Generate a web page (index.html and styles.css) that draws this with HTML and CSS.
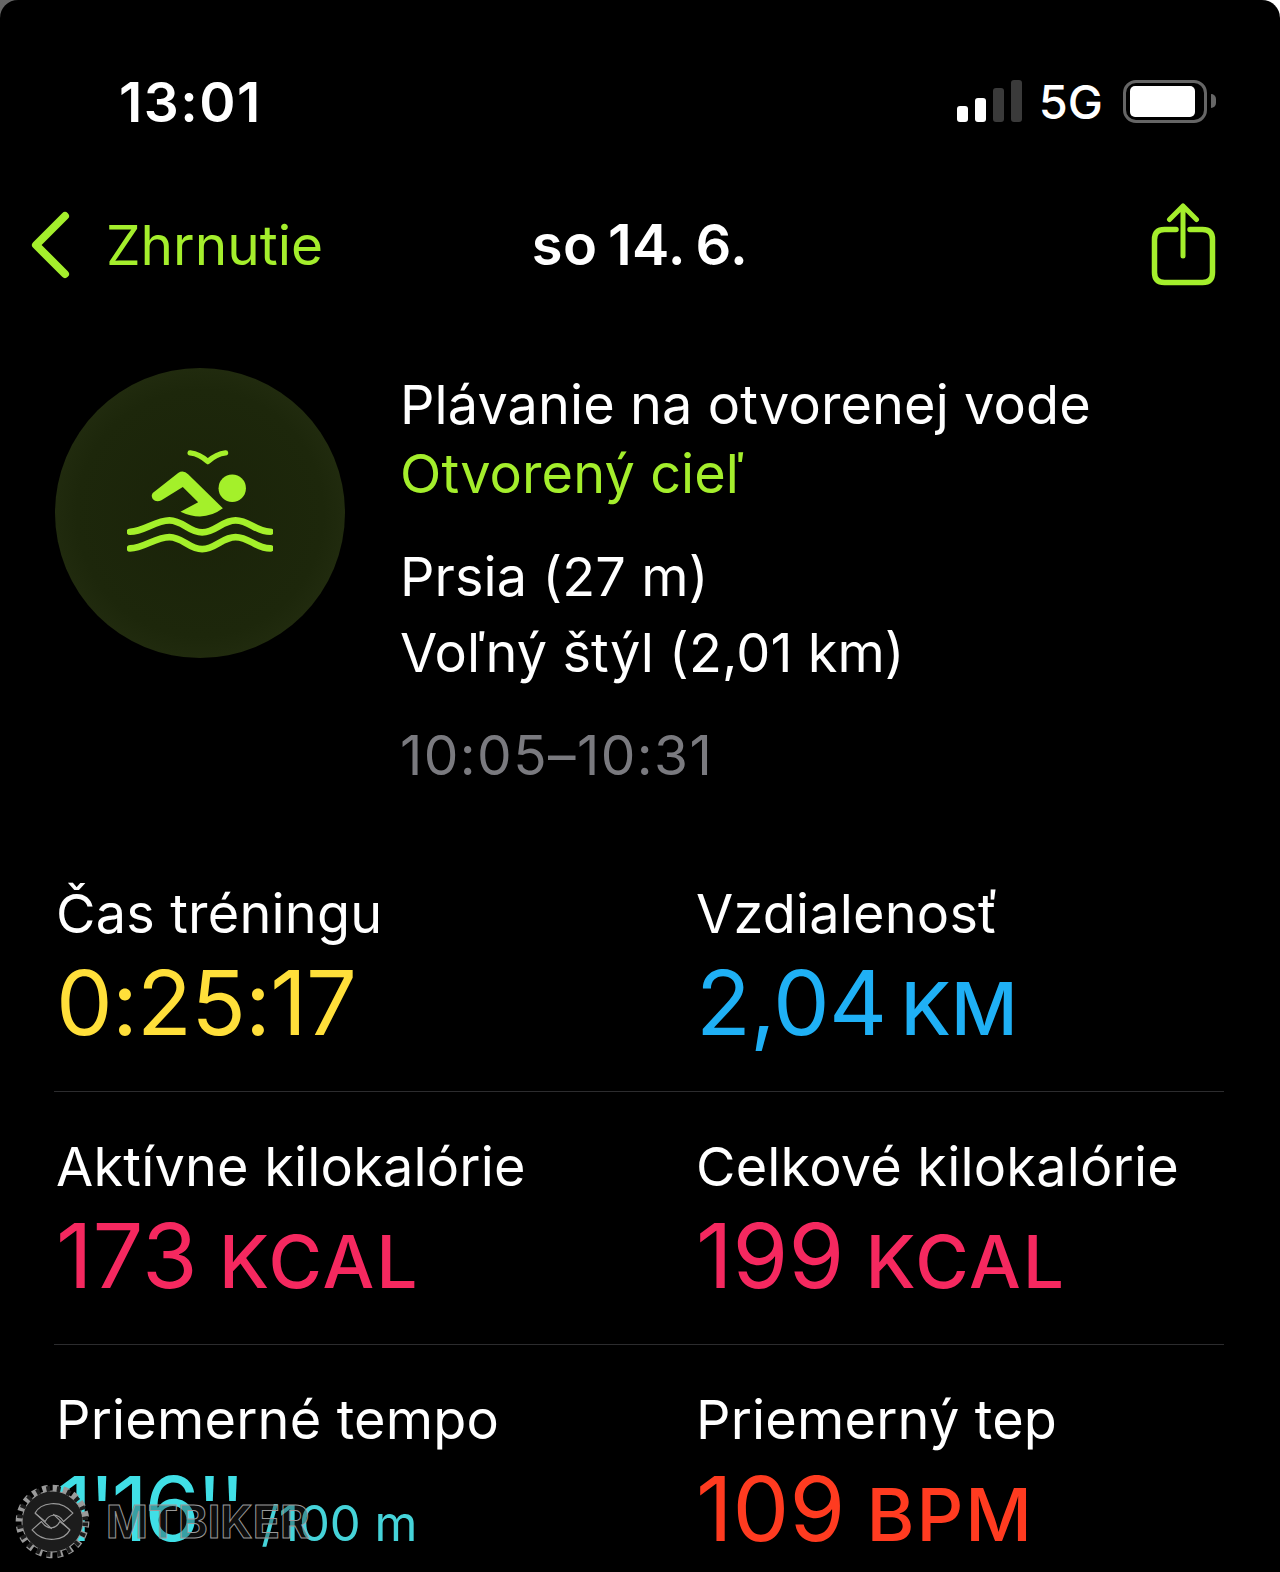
FILE: index.html
```html
<!DOCTYPE html>
<html lang="sk">
<head>
    <title>Plávanie na otvorenej vode</title>
    <meta charset="UTF-8">
    <link rel="stylesheet" href="styles.css">
</head>
<body>
    <div class="screen">
        <div class="status-bar">
            <span class="time">13:01</span>
            <div class="status-icons">
                <div class="signal">
                    <i class="bar bar1"></i>
                    <i class="bar bar2"></i>
                    <i class="bar bar3"></i>
                    <i class="bar bar4"></i>
                </div>
                <span class="network">5G</span>
                <div class="battery">
                    <div class="battery-fill"></div>
                </div>
                <div class="battery-cap"></div>
            </div>
        </div>

        <div class="nav">
            <div class="nav-back">
                <svg class="chevron" viewBox="0 0 40 68" width="40" height="68">
                    <path d="M35 5 L6 34 L35 63" fill="none" stroke="#a4ee2c" stroke-width="8" stroke-linecap="round" stroke-linejoin="round"/>
                </svg>
                <span>Zhrnutie</span>
            </div>
            <div class="nav-title">so 14. 6.</div>
            <svg class="share" viewBox="0 0 66 84" width="66" height="84">
                <path d="M26 27.5 H14.5 Q4.5 27.5 4.5 37.5 V70.5 Q4.5 80.5 14.5 80.5 H52.5 Q62.5 80.5 62.5 70.5 V37.5 Q62.5 27.5 52.5 27.5 H40" fill="none" stroke="#a4ee2c" stroke-width="5.5" stroke-linecap="round"/>
                <path d="M33 54 V4 M19.5 17.5 L33 4 L46.5 17.5" fill="none" stroke="#a4ee2c" stroke-width="5" stroke-linecap="round" stroke-linejoin="round"/>
            </svg>
        </div>

        <div class="workout">
            <div class="workout-icon">
                <svg viewBox="265 265 437 310" width="146" height="104">
                    <path d="M454 276 Q482 279 507 302 Q532 279 560 276" fill="none" stroke="#a4f02a" stroke-width="16" stroke-linecap="round" stroke-linejoin="round"/>
                    <circle cx="580" cy="382" r="41" fill="#a4f02a"/>
                    <path d="M342 396 L418 336 Q434 326 448 340 L552 442 Q495 485 425 452 L478 424 L432 378 L368 418 Q352 425 342 414 Q336 404 342 396 Z" fill="#a4f02a"/>
                    <path d="M274 512 C315 512 350 478 392 478 C432 478 450 514 490 514 C530 514 550 478 590 478 C632 478 650 512 694 512" fill="none" stroke="#a4f02a" stroke-width="20" stroke-linecap="round"/>
                    <path d="M274 562 C315 562 350 528 392 528 C432 528 450 564 490 564 C530 564 550 528 590 528 C632 528 650 562 694 562" fill="none" stroke="#a4f02a" stroke-width="20" stroke-linecap="round"/>
                </svg>
            </div>
            <div class="workout-info">
                <div class="info-line">Plávanie na otvorenej vode</div>
                <div class="info-line lime">Otvorený cieľ</div>
                <div class="info-line strokes">Prsia (27 m)</div>
                <div class="info-line">Voľný štýl (2,01 km)</div>
                <div class="info-line hours">10:05–10:31</div>
            </div>
        </div>

        <div class="stats">
            <div class="stat-row">
                <div class="stat">
                    <div class="stat-label">Čas tréningu</div>
                    <div class="stat-value yellow">0:25:17</div>
                </div>
                <div class="stat">
                    <div class="stat-label">Vzdialenosť</div>
                    <div class="stat-value blue">2,04 <span class="unit">KM</span></div>
                </div>
            </div>
            <div class="stat-row">
                <div class="stat">
                    <div class="stat-label">Aktívne kilokalórie</div>
                    <div class="stat-value pink">173 <span class="unit">KCAL</span></div>
                </div>
                <div class="stat">
                    <div class="stat-label">Celkové kilokalórie</div>
                    <div class="stat-value pink">199 <span class="unit">KCAL</span></div>
                </div>
            </div>
            <div class="stat-row last">
                <div class="stat">
                    <div class="stat-label">Priemerné tempo</div>
                    <div class="stat-value cyan"><span class="pace">1'16''</span> <span class="unit-small">/100 m</span></div>
                </div>
                <div class="stat">
                    <div class="stat-label">Priemerný tep</div>
                    <div class="stat-value red">109 <span class="unit">BPM</span></div>
                </div>
            </div>
        </div>

        <div class="watermark">
            <svg viewBox="12 15 230 230" width="77" height="77">
                <circle cx="127" cy="130" r="100" fill="none" stroke="#9a9a9a" stroke-width="20" stroke-dasharray="17 14.4"/>
                <circle cx="127" cy="130" r="91" fill="#1c1c1c" stroke="#9a9a9a" stroke-width="3"/>
                <circle cx="127" cy="130" r="98" fill="none" stroke="#1c1c1c" stroke-width="17" stroke-dasharray="11 20.4" stroke-dashoffset="-3"/>
                <path d="M75 105 C90 75 150 60 188 105 L160 130 C140 100 115 110 105 130 Z" fill="none" stroke="#9a9a9a" stroke-width="3.5" stroke-linejoin="round"/>
                <path d="M179 155 C164 185 104 200 66 155 L94 130 C114 160 139 150 149 130 Z" fill="none" stroke="#9a9a9a" stroke-width="3.5" stroke-linejoin="round"/>
                <path d="M75 105 L125 152 M179 155 L129 108" fill="none" stroke="#9a9a9a" stroke-width="3.5"/>
            </svg>
            <span class="watermark-text">MTBIKER</span>
        </div>
    </div>
</body>
</html>
```

FILE: styles.css
```css
* {
    box-sizing: border-box;
}
html, body {
    margin: 0;
    padding: 0;
    background: linear-gradient(to right, #666, #fff);
}
.screen {
    position: relative;
    width: 1280px;
    height: 1572px;
    overflow: hidden;
    border-radius: 18px 18px 0 0;
    background: #000;
    color: #fff;
    font-family: Inter, "Liberation Sans", sans-serif;
}

/* status bar */
.status-bar {
    height: 200px;
    padding: 72px 64px 0 119px;
    display: flex;
    justify-content: space-between;
    align-items: flex-start;
}
.time {
    font-size: 55px;
    font-weight: 600;
    line-height: 60px;
    letter-spacing: 1.5px;
}
.status-icons {
    display: flex;
    align-items: center;
    height: 44px;
    margin-top: 7px;
}
.signal {
    display: flex;
    align-items: flex-end;
    gap: 7px;
    height: 42px;
    margin-right: 17px;
}
.bar {
    display: block;
    width: 11px;
    border-radius: 3px;
    background: #fff;
}
.bar1 { height: 16px; }
.bar2 { height: 24px; }
.bar3 { height: 34px; background: #3a3a3a; }
.bar4 { height: 42px; background: #3a3a3a; }
.network {
    font-size: 47px;
    font-weight: 500;
    margin-right: 20px;
}
.battery {
    width: 84px;
    height: 43px;
    padding: 3px 9px 3px 4px;
    border: 3px solid #666;
    border-radius: 13px;
}
.battery-fill {
    height: 100%;
    background: #fff;
    border-radius: 5px;
}
.battery-cap {
    width: 5px;
    height: 14px;
    margin-left: 4px;
    background: #666;
    border-radius: 0 5px 5px 0;
}

/* nav */
.nav {
    position: relative;
    height: 90px;
    padding: 0 64px 0 30px;
    display: flex;
    align-items: center;
    justify-content: space-between;
    color: #a4ee2c;
}
.nav-back {
    display: flex;
    align-items: center;
    gap: 36px;
    font-size: 55px;
}
.share {
    margin-top: -3px;
}
.nav-title {
    position: absolute;
    left: 0;
    right: 0;
    text-align: center;
    color: #fff;
    font-size: 56px;
    font-weight: 600;
    letter-spacing: 0.4px;
    word-spacing: -4px;
}

/* workout header */
.workout {
    display: flex;
    gap: 55px;
    padding: 78px 0 0 55px;
}
.workout-icon {
    flex: none;
    width: 290px;
    height: 290px;
    border-radius: 50%;
    background: radial-gradient(circle, #1a2309 0%, #1d270b 60%, #2a3416 100%);
    display: flex;
    align-items: center;
    justify-content: center;
}
.workout-icon svg {
    margin-bottom: 24px;
}
.workout-info {
    font-size: 54px;
    line-height: 69px;
    padding-top: 2px;
    letter-spacing: 0.1px;
}
.lime {
    color: #a4ee2c;
}
.strokes {
    margin-top: 34px;
    margin-bottom: 7px;
}
.hours {
    margin-top: 34px;
    color: #7a7a7f;
    font-size: 55px;
    letter-spacing: 1.4px;
}

/* stats */
.stats {
    margin: 49px 56px 0 54px;
}
.stat-row {
    display: grid;
    grid-template-columns: 640px 1fr;
    height: 253px;
    padding: 44px 0 0 2px;
    border-bottom: 1px solid #2c2c2e;
}
.stat-row.last {
    border-bottom: none;
}
.stat-label {
    font-size: 54px;
    line-height: 62px;
    letter-spacing: 0.2px;
}
.stat-value {
    font-size: 90px;
    line-height: 104px;
    margin-top: 6px;
    white-space: nowrap;
}
.unit {
    font-size: 73px;
    font-weight: 500;
    margin-left: -4px;
    letter-spacing: 2px;
}
.yellow, .blue {
    letter-spacing: -0.8px;
}
.blue .unit {
    margin-left: -10px;
    letter-spacing: 0;
}
.pace {
    letter-spacing: -4px;
}
.unit-small {
    font-size: 49px;
    margin-left: -6px;
    color: #45d3d9;
}
.yellow { color: #ffdf3a; }
.blue { color: #1fb0f5; }
.pink { color: #f5285f; }
.cyan { color: #40dfe6; }
.red { color: #ff3b20; }

/* site watermark */
.watermark {
    position: absolute;
    left: 14px;
    top: 1483px;
    display: flex;
    align-items: center;
    gap: 15px;
}
.watermark-text {
    font-size: 45px;
    font-weight: 700;
    color: rgba(40, 40, 40, 0.35);
    -webkit-text-stroke: 1px #9a9a9a;
}
```
